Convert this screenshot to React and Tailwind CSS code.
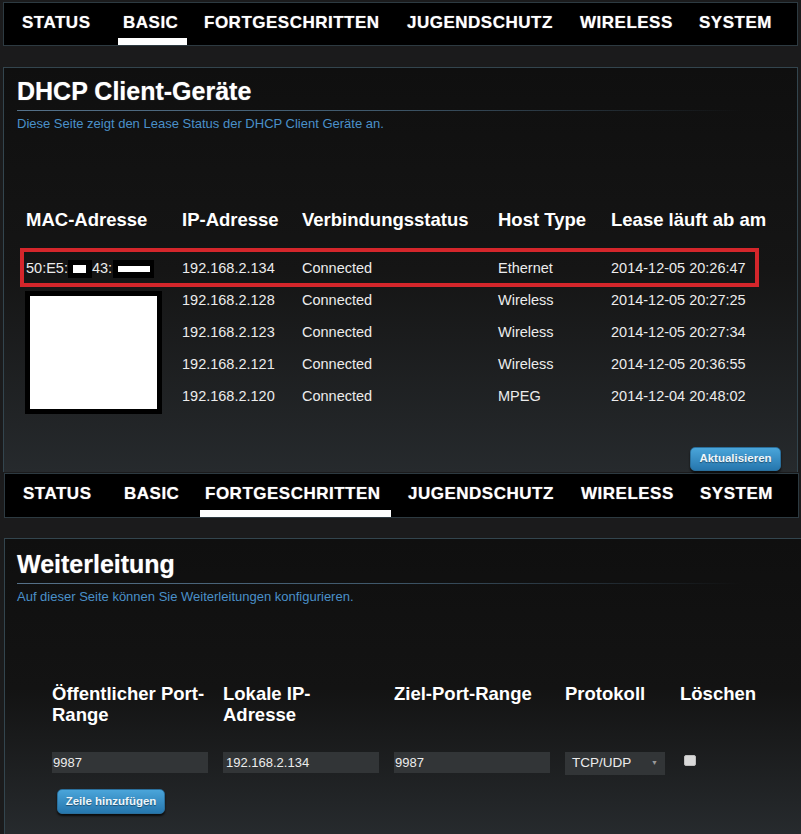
const NAV_ITEMS = [
  { label: "STATUS", w: "w-[101px]" },
  { label: "BASIC", w: "w-[81px]" },
  { label: "FORTGESCHRITTEN", w: "w-[203px]" },
  { label: "JUGENDSCHUTZ", w: "w-[173px]" },
  { label: "WIRELESS", w: "w-[119px]" },
  { label: "SYSTEM", w: "w-[100px]" },
];

const CLIENTS = [
  { ip: "192.168.2.134", status: "Connected", type: "Ethernet", lease: "2014-12-05 20:26:47" },
  { ip: "192.168.2.128", status: "Connected", type: "Wireless", lease: "2014-12-05 20:27:25" },
  { ip: "192.168.2.123", status: "Connected", type: "Wireless", lease: "2014-12-05 20:27:34" },
  { ip: "192.168.2.121", status: "Connected", type: "Wireless", lease: "2014-12-05 20:36:55" },
  { ip: "192.168.2.120", status: "Connected", type: "MPEG", lease: "2014-12-04 20:48:02" },
];

function NavBar({ active, underline, className }) {
  return (
    <div className={`border border-[#2d3a41] bg-black flex pl-[13px] ${className}`}>
      {NAV_ITEMS.map((item) => (
        <div key={item.label} className={`relative h-full shrink-0 ${item.w}`}>
          <span className="block pl-[5px] pt-[10px] text-[17px] leading-[20px] font-bold text-white tracking-[0.5px] [text-shadow:0_0_1px_rgba(255,255,255,0.6)]">
            {item.label}
          </span>
          {item.label === active && (
            <div className={`absolute left-0 bottom-0 h-[7px] bg-white ${underline}`} />
          )}
        </div>
      ))}
    </div>
  );
}

function BlueButton({ children, className }) {
  return (
    <button className={`rounded-[5px] border border-[#2a6f9c] bg-linear-to-b from-[#4aa5da] to-[#2677ae] text-[11.5px] font-bold text-[#eef6fb] [text-shadow:0_1px_1px_rgba(0,0,0,0.4)] shadow-[0_2px_2px_rgba(0,0,0,0.7)] ${className}`}>
      {children}
    </button>
  );
}

function PanelHead({ title, text }) {
  return (
    <>
      <h1 className="text-[25px] leading-[30px] font-bold text-white [text-shadow:0_0_1px_rgba(255,255,255,0.5)]">{title}</h1>
      <div className="mt-[4px] h-px w-[725px] bg-linear-to-r from-[#557189] via-[#3f586b] to-transparent" />
      <p className="mt-[5px] text-[13px] leading-[16px] text-[#4a90c9]">{text}</p>
    </>
  );
}

export default function App() {
  return (
    <div className="w-[801px] h-[834px] overflow-hidden bg-[#1b1b1c] font-['Liberation_Sans',Arial,sans-serif]">
      {/* DHCP client list */}
      <div className="pt-[2px] pl-[3px] pr-[3px]">
        <NavBar active="BASIC" underline="w-[69px]" className="h-[44px]" />
      </div>
      <div className="mt-[21px] ml-[3px] mr-[3px] border-t border-l border-r border-[#33454e] bg-linear-to-b from-[#0f0f0f] via-[#151515] to-[#262a2d] pl-[13px] pt-[8px] pb-[1px]">
        <PanelHead title="DHCP Client-Geräte" text="Diese Seite zeigt den Lease Status der DHCP Client Geräte an." />

        <div className="mt-[77px] pl-[9px] relative">
          <div className="grid grid-cols-[156px_120px_196px_113px_1fr] text-[18.5px] leading-[22px] font-bold text-white">
            <div>MAC-Adresse</div>
            <div>IP-Adresse</div>
            <div>Verbindungsstatus</div>
            <div>Host Type</div>
            <div>Lease läuft ab am</div>
          </div>
          <div className="mt-[22px] relative">
            {CLIENTS.map((c, i) => (
              <div key={c.ip} className="grid grid-cols-[156px_120px_196px_113px_1fr] h-[32px] items-center text-[14.5px] text-[#ececec]">
                <div className="flex items-center">
                  {i === 0 && (
                    <>
                      <span>50:E5:</span>
                      <span className="w-[24px] h-[18px] bg-black flex items-center justify-center">
                        <span className="w-[13px] h-[8px] bg-white" />
                      </span>
                      <span>43:</span>
                      <span className="ml-[1px] w-[41px] h-[18px] bg-black flex items-center justify-center">
                        <span className="w-[32px] h-[6px] bg-white" />
                      </span>
                    </>
                  )}
                </div>
                <div>{c.ip}</div>
                <div>{c.status}</div>
                <div>{c.type}</div>
                <div>{c.lease}</div>
              </div>
            ))}
            {/* annotation + redaction */}
            <div className="absolute left-[-6px] top-[-5px] w-[739px] h-[39px] border-[4px] border-[#d4262b]" />
            <div className="absolute left-[-1px] top-[38px] w-[137px] h-[123px] border-[5px] border-black bg-white" />
          </div>
        </div>

        <div className="mt-[34px] flex justify-end pr-[16px]">
          <BlueButton className="w-[91px] h-[24px]">Aktualisieren</BlueButton>
        </div>
      </div>

      {/* Port forwarding */}
      <div className="mt-[1px] pl-[4px] pr-[2px]">
        <NavBar active="FORTGESCHRITTEN" underline="w-[191px]" className="h-[45px]" />
      </div>
      <div className="mt-[20px] ml-[4px] h-[300px] border-t border-l border-[#33454e] bg-linear-to-b from-[#0f0f0f] via-[#131313] to-[#272b2e] pl-[12px] pt-[10px]">
        <PanelHead title="Weiterleitung" text="Auf dieser Seite können Sie Weiterleitungen konfigurieren." />

        <div className="mt-[78px] pl-[35px]">
          <div className="grid grid-cols-[171px_171px_171px_115px_1fr] text-[18.5px] leading-[21px] font-bold text-white">
            <div className="pr-[10px]">Öffentlicher Port-Range</div>
            <div className="pr-[40px]">Lokale IP-Adresse</div>
            <div>Ziel-Port-Range</div>
            <div>Protokoll</div>
            <div>Löschen</div>
          </div>
          <div className="mt-[27px] grid grid-cols-[171px_171px_171px_115px_1fr] items-start text-[13px] text-[#ececec]">
            <div className="w-[156px] h-[21px] bg-[#323537] pl-[1px] leading-[21px]">9987</div>
            <div className="w-[156px] h-[21px] bg-[#323537] pl-[3px] leading-[21px]">192.168.2.134</div>
            <div className="w-[156px] h-[21px] bg-[#323537] pl-[1px] leading-[21px]">9987</div>
            <div className="w-[100px] h-[23px] bg-[#323537] pl-[7px] pr-[7px] flex items-center justify-between">
              <span className="text-[13.5px]">TCP/UDP</span>
              <span className="text-[7px] text-[#9a9a9a]">▼</span>
            </div>
            <div className="pl-[4px] pt-[3px]">
              <div className="w-[12px] h-[11px] rounded-[2px] bg-[#d9d9d9] border border-[#bdbdbd]" />
            </div>
          </div>
          <BlueButton className="mt-[14px] ml-[5px] w-[108px] h-[25px]">Zeile hinzufügen</BlueButton>
        </div>
      </div>
    </div>
  );
}
